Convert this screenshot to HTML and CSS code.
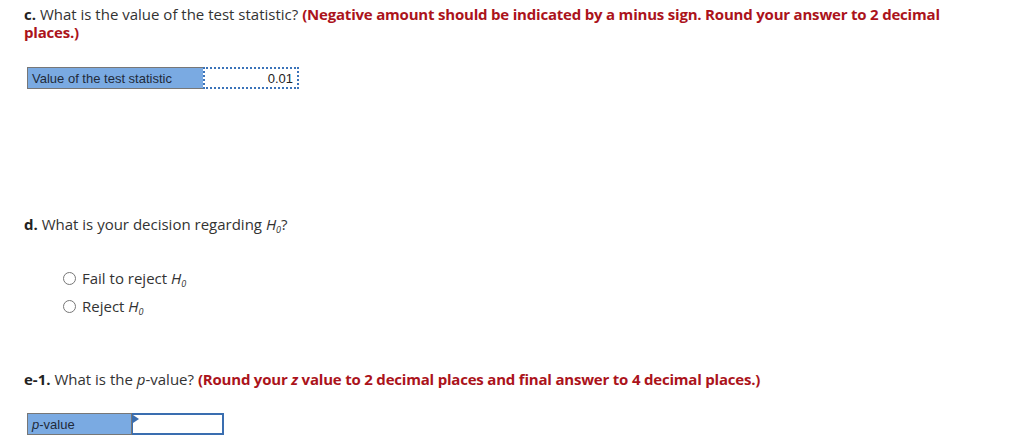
FILE: index.html
```html
<!DOCTYPE html>
<html>
<head>
<meta charset="utf-8">
<link rel="stylesheet" href="styles.css">
</head>
<body>
<div class="page">
  <section class="part part-c">
    <p class="q"><b>c.</b> What is the value of the test statistic? <span class="hint">(Negative amount should be indicated by a minus sign. Round your answer to 2 decimal places.)</span></p>
    <div class="grid grid-c">
      <div class="label">Value of the test statistic</div>
      <div class="cell dotted">0.01</div>
    </div>
  </section>
  <section class="part part-d">
    <p class="q"><b>d.</b> What is your decision regarding <i>H</i><sub>0</sub>?</p>
    <div class="options">
      <label class="opt"><span class="radio"></span><span>Fail to reject <i>H</i><sub>0</sub></span></label>
      <label class="opt"><span class="radio"></span><span>Reject <i>H</i><sub>0</sub></span></label>
    </div>
  </section>
  <section class="part part-e">
    <p class="q"><b>e-1.</b> What is the <i>p</i>-value? <span class="hint">(Round your <i>z</i> value to 2 decimal places and final answer to 4 decimal places.)</span></p>
    <div class="grid grid-e">
      <div class="label"><i>p</i>-value</div>
      <div class="cell active"><span class="tri"></span></div>
    </div>
  </section>
</div>
</body>
</html>
```

FILE: styles.css
```css
html, body { margin: 0; padding: 0; background: #fff; }
body { font-family: "Open Sans", "Lato", sans-serif; color: #333; font-size: 15px; }
.page { padding: 5px 0 0 24px; width: 920px; }
.q { margin: 0; line-height: 18px; }
.q b { font-weight: 700; color: #222; }
.hint { color: #ab131b; font-weight: 700; letter-spacing: -0.2px; }
.q i, .opt i { font-style: italic; }
sub { font-size: 9px; line-height: 0; vertical-align: -3px; font-style: italic; }
.grid { display: flex; margin-left: 3px; height: 22px; font-family: "Liberation Sans", Arial, sans-serif; font-size: 13px; }
.grid-c { margin-top: 26px; }
.label { background: #7aaae2; border: 1px solid #777; color: #1f2a3a; display: flex; align-items: center; padding-left: 4px; box-sizing: border-box; height: 22px; }
.grid-c .label { width: 176px; border-right: none; }
.cell { box-sizing: border-box; height: 22px; background: #fff; display: flex; align-items: center; justify-content: flex-end; padding-right: 4px; position: relative; color: #222; }
.dotted { width: 96px; border: 2px dotted #3b73b9; }
.part-d { margin-top: 126px; }
.options { margin: 36px 0 0 39px; display: flex; flex-direction: column; gap: 10px; }
.opt { display: flex; align-items: center; line-height: 18px; }
.radio { width: 13px; height: 13px; border: 1px solid #777; border-radius: 50%; margin-right: 6px; box-sizing: border-box; background: #fff; }
.part-e { margin-top: 55px; }
.grid-e { margin-top: 25px; }
.grid-e .label { width: 105px; border-right: 1px solid #777; }
.active { width: 92px; border: 2px solid #3a6eb0; border-left-width: 1px; }
.tri { position: absolute; left: 0; top: 0; width: 0; height: 0; border-top: 4px solid transparent; border-bottom: 4px solid transparent; border-left: 6px solid #3a6eb0; }
```
